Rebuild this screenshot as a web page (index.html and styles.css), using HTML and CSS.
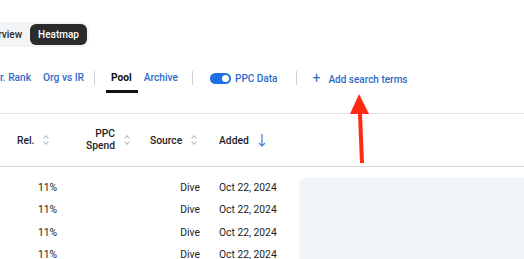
FILE: index.html
```html
<!DOCTYPE html>
<html lang="en">
<head>
  <meta charset="UTF-8">
  <meta name="viewport" content="width=device-width, initial-scale=1">
  <title>Heatmap</title>
  <link rel="stylesheet" href="styles.css">
</head>
<body>

<div class="page">
  <div class="seg">
    <span class="seg-item">Overview</span>
    <span class="seg-item active">Heatmap</span>
  </div>

  <div class="tabs">
    <span class="tab tab-first">Curr. Rank</span>
    <span class="tab">Org vs IR</span>
    <span class="sep"></span>
    <span class="tab current">Pool</span>
    <span class="tab archive">Archive</span>
    <span class="sep"></span>
    <span class="toggle-wrap"><span class="toggle"><span class="knob"></span></span>PPC Data</span>
    <span class="sep"></span>
    <span class="tab add"><span class="plus">+</span>Add search terms</span>
  </div>

  <div class="grid">
    <div class="head c-prev">
      <svg class="arrow" width="8" height="14" viewBox="0 0 8 14"><path d="M4 1V13M1 10L4 13L7 10" fill="none" stroke="#4a86d8" stroke-width="1.3"/></svg>
    </div>
    <div class="head c-rel">Rel. <span class="sort"></span></div>
    <div class="head c-ppc"><span class="two">PPC<br>Spend</span> <span class="sort"></span></div>
    <div class="head c-src">Source <span class="sort"></span></div>
    <div class="head c-add">Added
      <svg class="arrow" width="8" height="14" viewBox="0 0 8 14"><path d="M4 1V13M1 10L4 13L7 10" fill="none" stroke="#4a86d8" stroke-width="1.3"/></svg>
    </div>
    <div class="head c-box"></div>

    <div class="cell c-prev"></div>
    <div class="cell c-rel">11%</div>
    <div class="cell c-ppc"></div>
    <div class="cell c-src">Dive</div>
    <div class="cell c-add">Oct 22, 2024</div>
    <div class="box"></div>

    <div class="cell c-prev"></div>
    <div class="cell c-rel">11%</div>
    <div class="cell c-ppc"></div>
    <div class="cell c-src">Dive</div>
    <div class="cell c-add">Oct 22, 2024</div>

    <div class="cell c-prev"></div>
    <div class="cell c-rel">11%</div>
    <div class="cell c-ppc"></div>
    <div class="cell c-src">Dive</div>
    <div class="cell c-add">Oct 22, 2024</div>

    <div class="cell c-prev"></div>
    <div class="cell c-rel">11%</div>
    <div class="cell c-ppc"></div>
    <div class="cell c-src">Dive</div>
    <div class="cell c-add">Oct 22, 2024</div>
  </div>
</div>

<svg class="pointer" width="30" height="80" viewBox="0 0 30 80">
  <path d="M14 22 L16 71" stroke="#ff2a12" stroke-width="4" stroke-linecap="butt"/>
  <polygon points="13,2 4,22 23,22" fill="#ff2a12"/>
</svg>

</body>
</html>
```

FILE: styles.css
```css
body {
  margin: 0;
  font-family: Roboto, "Liberation Sans", sans-serif;
  background: #fff;
  color: #1f2328;
  overflow: hidden;
  width: 524px;
  height: 259px;
  position: relative;
}
.page {
  padding-top: 22px;
}
.seg {
  display: inline-flex;
  align-items: center;
  background: #f3f4f6;
  border-radius: 8px;
  padding: 2px;
  margin-left: -29px;
  font-size: 10px;
  font-weight: 500;
}
.seg-item {
  padding: 0 8px;
  height: 21px;
  line-height: 21px;
  border-radius: 6px;
  color: #2b2b2b;
}
.seg-item.active {
  background: #2b2b2b;
  color: #fff;
}
.tabs {
  display: flex;
  align-items: center;
  margin-top: 20px;
  margin-left: -21px;
  height: 26px;
  font-size: 10.2px;
  font-weight: 500;
  color: #2e6bc9;
}
.tab {
  padding: 0 5px;
  height: 26px;
  line-height: 22px;
  box-sizing: border-box;
}
.tab-first {
  margin-right: 2px;
}
.tab.current {
  color: #111;
  font-weight: 700;
  border-bottom: 3px solid #111;
  margin: 0 1px 0 6px;
  padding: 0 6px 0 5px;
}
.tab.archive {
  margin-right: 4px;
}
.sep {
  width: 1px;
  height: 14px;
  background: #ccd0d5;
  margin: 0 5px 4px 5px;
}
.toggle-wrap {
  display: flex;
  align-items: center;
  margin: 0 14px 4px 12px;
  font-size: 10px;
}
.toggle {
  width: 21px;
  height: 11px;
  border-radius: 6px;
  background: #1d6fe3;
  position: relative;
  margin-right: 4px;
}
.knob {
  position: absolute;
  right: 2px;
  top: 2px;
  width: 7px;
  height: 7px;
  border-radius: 50%;
  background: #fff;
}
.add {
  margin-left: 5px;
  font-size: 10px;
}
.plus {
  font-size: 14px;
  font-weight: 400;
  margin-right: 8px;
}
.grid {
  display: grid;
  grid-template-columns: 10px 56px 78px 68px 86px 1fr;
  margin-top: 20px;
  font-size: 10.3px;
  margin-left: -4px;
}
.head {
  height: 52px;
  border-top: 1px solid #e3e6ea;
  border-bottom: 1px solid #d3d7dd;
  display: flex;
  align-items: center;
  font-weight: 500;
  color: #1f2328;
  margin-bottom: 9px;
}
.c-rel {
  justify-content: flex-start;
  padding-left: 11px;
}
.c-ppc {
  justify-content: flex-end;
  text-align: right;
  padding-right: 9px;
}
.c-src {
  padding-left: 10px;
}
.c-add {
  padding-left: 11px;
}
.two {
  line-height: 12px;
}
.sort {
  display: inline-block;
  width: 7px;
  height: 10px;
  margin-left: 9px;
  position: relative;
}
.sort::before, .sort::after {
  content: "";
  position: absolute;
  left: 1px;
  width: 3px;
  height: 3px;
  border-left: 1px solid #b5bac2;
  border-top: 1px solid #b5bac2;
}
.sort::before {
  top: 1px;
  transform: rotate(45deg);
}
.sort::after {
  bottom: 1px;
  transform: rotate(225deg);
}
.arrow {
  margin-left: 9px;
}
.c-prev .arrow {
  margin-left: -4px;
}
.cell {
  height: 22.5px;
  display: flex;
  align-items: center;
  color: #222;
}
.cell.c-rel {
  justify-content: flex-end;
  padding: 0 5px 0 0;
}
.cell.c-src {
  justify-content: flex-end;
  padding: 0 8px 0 0;
}
.box {
  grid-column: 6;
  grid-row: 2 / span 4;
  margin-left: 5px;
  margin-top: 2px;
  background: #f1f4f8;
  border-radius: 6px 0 0 0;
}
.pointer {
  position: absolute;
  left: 346px;
  top: 92px;
}
```
